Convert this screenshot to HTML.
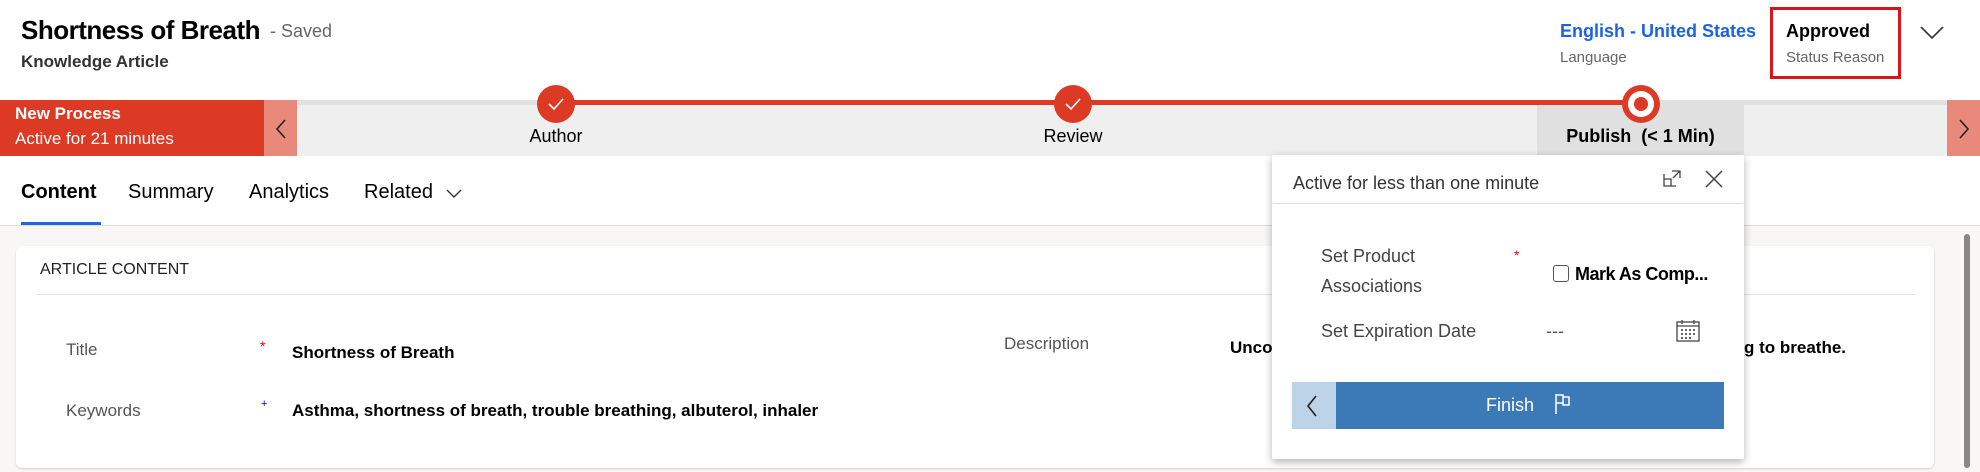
<!DOCTYPE html>
<html><head><meta charset="utf-8"><style>
*{margin:0;padding:0;box-sizing:border-box}
body{width:1980px;height:472px;overflow:hidden;background:#fff;font-family:"Liberation Sans",sans-serif;position:relative;color:#000}
.a{position:absolute;white-space:nowrap}
</style></head><body>
<!-- header -->
<div class="a" style="left:21px;top:15px;font-size:26px;font-weight:bold;letter-spacing:-0.5px">Shortness of Breath</div>
<div class="a" style="left:270px;top:21px;font-size:18px;color:#666">- Saved</div>
<div class="a" style="left:21px;top:52px;font-size:17px;font-weight:bold;color:#333">Knowledge Article</div>
<div class="a" style="left:1560px;top:21px;font-size:18px;font-weight:bold;color:#1a63e6">English - United States</div>
<div class="a" style="left:1560px;top:49px;font-size:15px;color:#666">Language</div>
<div class="a" style="left:1770px;top:7px;width:131px;height:72px;border:3px solid #d9141c"></div>
<div class="a" style="left:1786px;top:21px;font-size:18px;font-weight:bold">Approved</div>
<div class="a" style="left:1786px;top:49px;font-size:15px;color:#666">Status Reason</div>
<svg class="a" style="left:1920px;top:26px" width="24" height="14"><path d="M1 1 L12 12 L23 1" fill="none" stroke="#333" stroke-width="1.6"/></svg>

<!-- process bar -->
<div class="a" style="left:0;top:100px;width:1980px;height:56px;background:#efefef;border-top:5px solid #e0e0e0"></div>
<div class="a" style="left:1537px;top:105px;width:207px;height:51px;background:#e0e0e0"></div>
<div class="a" style="left:0;top:100px;width:264px;height:56px;background:#dc3a24"></div>
<div class="a" style="left:264px;top:100px;width:33px;height:56px;background:#e8897b"></div>
<svg class="a" style="left:274px;top:118px" width="14" height="22"><path d="M11 2 L3 11 L11 20" fill="none" stroke="#222" stroke-width="1.6"/></svg>
<div class="a" style="left:1947px;top:100px;width:33px;height:56px;background:#e8897b"></div>
<svg class="a" style="left:1957px;top:118px" width="14" height="22"><path d="M3 2 L11 11 L3 20" fill="none" stroke="#222" stroke-width="1.6"/></svg>
<div class="a" style="left:15px;top:104px;font-size:17px;font-weight:bold;color:#fff">New Process</div>
<div class="a" style="left:15px;top:129px;font-size:17px;color:#fff">Active for 21 minutes</div>
<div class="a" style="left:556px;top:100px;width:1085px;height:5px;background:#dc3a24"></div>
<svg class="a" style="left:537px;top:85px" width="38" height="38"><circle cx="19" cy="19" r="19" fill="#dc3a24"/><path d="M12 19 L17 24 L26 14" fill="none" stroke="#fff" stroke-width="1.6"/></svg>
<svg class="a" style="left:1054px;top:85px" width="38" height="38"><circle cx="19" cy="19" r="19" fill="#dc3a24"/><path d="M12 19 L17 24 L26 14" fill="none" stroke="#fff" stroke-width="1.6"/></svg>
<svg class="a" style="left:1622px;top:85px" width="38" height="38"><circle cx="19" cy="19" r="19" fill="#dc3a24"/><circle cx="19" cy="19" r="13" fill="#fff"/><circle cx="19" cy="19" r="7" fill="#dc3a24"/></svg>
<div class="a" style="left:456px;width:200px;text-align:center;top:126px;font-size:18px">Author</div>
<div class="a" style="left:973px;width:200px;text-align:center;top:126px;font-size:18px">Review</div>
<div class="a" style="left:1537px;width:207px;text-align:center;top:126px;font-size:18px;font-weight:bold">Publish&nbsp; (&lt; 1 Min)</div>

<!-- tabs -->
<div class="a" style="left:21px;top:181px;font-size:20px;font-weight:bold">Content</div>
<div class="a" style="left:21px;top:222px;width:80px;height:3px;background:#2266e3"></div>
<div class="a" style="left:128px;top:181px;font-size:20px">Summary</div>
<div class="a" style="left:249px;top:181px;font-size:20px">Analytics</div>
<div class="a" style="left:364px;top:181px;font-size:20px">Related</div>
<svg class="a" style="left:446px;top:189px" width="16" height="10"><path d="M1 1 L8 8 L15 1" fill="none" stroke="#333" stroke-width="1.4"/></svg>
<div class="a" style="left:0;top:225px;width:1980px;height:247px;background:#f8f7f6;border-top:1px solid #ddd"></div>

<!-- card -->
<div class="a" style="left:16px;top:246px;width:1918px;height:222px;background:#fff;border-radius:6px;box-shadow:0 1px 2px rgba(0,0,0,.15)"></div>
<div class="a" style="left:40px;top:261px;font-size:16px;color:#222">ARTICLE CONTENT</div>
<div class="a" style="left:36px;top:294px;width:1880px;height:1px;background:#e4e4e4"></div>
<div class="a" style="left:66px;top:340px;font-size:17px;color:#555">Title</div>
<div class="a" style="left:260px;top:338px;font-size:14px;color:#e00">*</div>
<div class="a" style="left:292px;top:343px;font-size:17px;font-weight:bold">Shortness of Breath</div>
<div class="a" style="left:66px;top:401px;font-size:17px;color:#555">Keywords</div>
<div class="a" style="left:261px;top:398px;font-size:11px;color:#00f">+</div>
<div class="a" style="left:292px;top:401px;font-size:17px;font-weight:bold">Asthma, shortness of breath, trouble breathing, albuterol, inhaler</div>
<div class="a" style="left:1004px;top:334px;font-size:17px;color:#555">Description</div>
<div class="a" style="left:1230px;top:338px;font-size:17px;font-weight:bold">Unco</div>
<div class="a" style="left:1744px;top:338px;font-size:17px;font-weight:bold">g to breathe.</div>
<div class="a" style="left:1964px;top:234px;width:6px;height:234px;background:#888;border-radius:3px"></div>

<!-- flyout -->
<div class="a" style="left:1272px;top:155px;width:472px;height:304px;background:#fff;box-shadow:0 3px 8px rgba(0,0,0,.3)"></div>
<div class="a" style="left:1293px;top:173px;font-size:18px;color:#333">Active for less than one minute</div>
<svg class="a" style="left:1663px;top:169px" width="20" height="18"><path d="M1 5 V17 H13 M1 10 H8 V17 M9 2 H17 V9 M17 2 L10 9" fill="none" stroke="#444" stroke-width="1.3"/></svg>
<svg class="a" style="left:1705px;top:170px" width="18" height="18"><path d="M1 1 L17 17 M17 1 L1 17" fill="none" stroke="#444" stroke-width="1.5"/></svg>
<div class="a" style="left:1273px;top:203px;width:470px;height:1px;background:#ddd"></div>
<div class="a" style="left:1321px;top:246px;font-size:18px;color:#444">Set Product</div>
<div class="a" style="left:1321px;top:276px;font-size:18px;color:#444">Associations</div>
<div class="a" style="left:1514px;top:247px;font-size:14px;color:#e00">*</div>
<div class="a" style="left:1553px;top:265px;width:16px;height:17px;border:1.5px solid #555;border-radius:3px"></div>
<div class="a" style="left:1575px;top:264px;font-size:18px;font-weight:bold;letter-spacing:-0.5px">Mark As Comp...</div>
<div class="a" style="left:1321px;top:321px;font-size:18px;color:#444">Set Expiration Date</div>
<div class="a" style="left:1546px;top:321px;font-size:18px;color:#555">---</div>
<svg class="a" style="left:1676px;top:319px" width="24" height="23"><rect x="1" y="3" width="22" height="19" fill="none" stroke="#444" stroke-width="1.3"/><path d="M1 7 H23 M6 1 V5 M18 1 V5" stroke="#444" stroke-width="1.3"/><g fill="#666"><rect x="5" y="10" width="2" height="2"/><rect x="9" y="10" width="2" height="2"/><rect x="13" y="10" width="2" height="2"/><rect x="17" y="10" width="2" height="2"/><rect x="5" y="14" width="2" height="2"/><rect x="9" y="14" width="2" height="2"/><rect x="13" y="14" width="2" height="2"/><rect x="17" y="14" width="2" height="2"/><rect x="5" y="18" width="2" height="2"/><rect x="9" y="18" width="2" height="2"/><rect x="13" y="18" width="2" height="2"/></g></svg>
<div class="a" style="left:1292px;top:382px;width:44px;height:47px;background:#bcd3e8"></div>
<svg class="a" style="left:1305px;top:394px" width="14" height="24"><path d="M11 2 L3 12 L11 22" fill="none" stroke="#222" stroke-width="1.6"/></svg>
<div class="a" style="left:1336px;top:382px;width:388px;height:47px;background:#3b79b7"></div>
<div class="a" style="left:1486px;top:395px;font-size:18px;color:#fff">Finish</div>
<svg class="a" style="left:1554px;top:393px" width="18" height="22"><path d="M2 1 V21 M2 2 H9 V4 H15 V12 H9 V10 H2 M9 2 V10" fill="none" stroke="#fff" stroke-width="1.5"/></svg>
</body></html>
